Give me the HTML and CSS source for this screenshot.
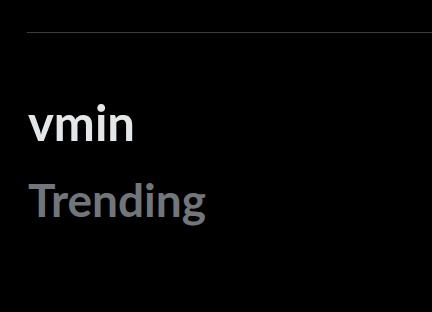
FILE: index.html
```html
<!DOCTYPE html>
<html>
<head>
<meta charset="utf-8">
<link rel="stylesheet" href="styles.css">
</head>
<body>
<div class="panel">
  <div class="item">
    <div class="term">vmin</div>
    <div class="label">Trending</div>
  </div>
</div>
</body>
</html>
```
FILE: styles.css
```css
html, body {
  margin: 0;
  padding: 0;
  background: #000;
  width: 432px;
  height: 312px;
  overflow: hidden;
}
.panel {
  padding-top: 32px;
  padding-left: 27px;
}
.item {
  border-top: 1px solid #3a3d40;
  padding-top: 59px;
  font-family: Lato, "Open Sans", sans-serif;
  font-weight: 700;
}
.term {
  color: #e4e6e7;
  font-size: 49px;
  line-height: 60px;
  padding-left: 1px;
}
.label {
  color: #71767b;
  font-size: 46px;
  line-height: 60px;
  margin-top: 18px;
  padding-left: 1px;
}
```
